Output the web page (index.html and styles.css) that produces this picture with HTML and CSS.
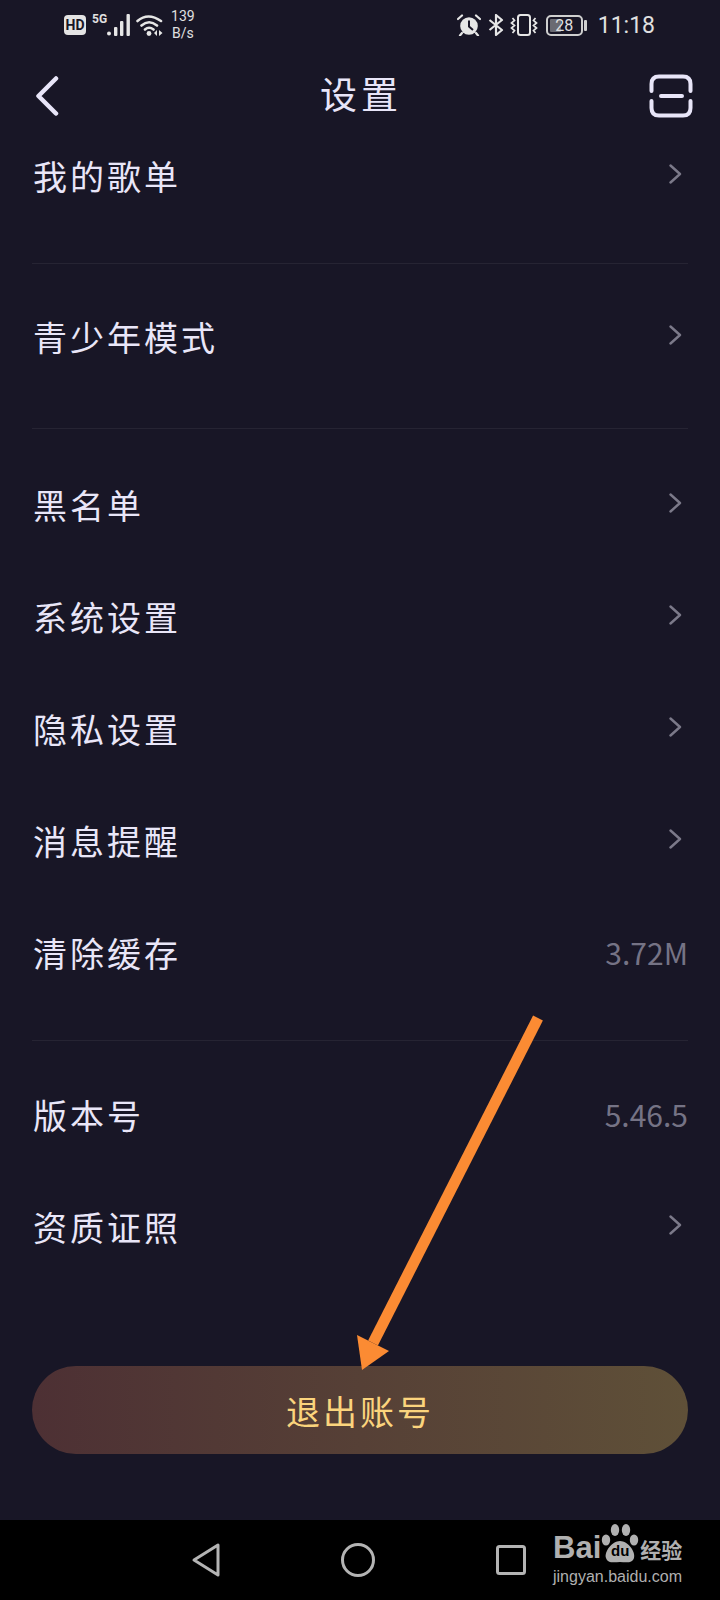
FILE: index.html

```html
<!doctype html>
<html lang="zh-CN">
<head>
    <meta http-equiv="Content-Type" content="text/html; charset=utf-8"/>
    <title>设置</title>
    <link rel="stylesheet" href="styles.css">
</head>

<body>

<svg class="defs" width="0" height="0">
    <symbol id="chev" viewBox="0 0 13 20">
        <path d="M1.5 1.5 L11 10 L1.5 18.5" fill="none" stroke="#7b7989" stroke-width="2.4" stroke-linecap="round" stroke-linejoin="round"/>
    </symbol>
</svg>

<div class="screen">
    <!--状态栏-->
    <div class="status">
        <div class="status-left">
            <svg class="ic-hd" width="22" height="20" viewBox="0 0 22 20"><rect width="22" height="20" rx="4" fill="#e4e4e4"/></svg>
            <span class="hd-text">HD</span>
            <span class="net">5G</span>
            <svg class="ic-signal" width="24" height="22" viewBox="0 0 24 22">
                <circle cx="2" cy="19.5" r="2" fill="#e6e6e6"/>
                <rect x="7" y="13" width="3.4" height="9" rx="1" fill="#e6e6e6"/>
                <rect x="13" y="7" width="3.4" height="15" rx="1" fill="#e6e6e6"/>
                <rect x="19.5" y="0" width="3.4" height="22" rx="1" fill="#e6e6e6"/>
            </svg>
            <svg class="ic-wifi" width="28" height="22" viewBox="0 0 28 22">
                <path d="M1.5 7 Q12 -2 25 7 M5.5 11.5 Q13 5 21 11.5 M9 15.5 Q13 12 17.5 15.5" fill="none" stroke="#e6e6e6" stroke-width="2.6" stroke-linecap="round"/>
                <circle cx="13" cy="19.5" r="2.4" fill="#e6e6e6"/>
                <path d="M21 16 L21 22 L18 19 Z M23 16 L23 22 L26.500 19 Z" fill="#e6e6e6"/>
            </svg>
            <div class="speed"><span>139</span><span>B/s</span></div>
        </div>
        <div class="status-right">
            <svg width="24" height="22" viewBox="0 0 24 22">
                <circle cx="12" cy="12" r="8.800" fill="#e6e6e6"/>
                <path d="M12 6.500 V12.500 L16 16" fill="none" stroke="#181626" stroke-width="2"/>
                <path d="M1 5 L5 1.500 M23 5 L19 1.500 M5 19 L3 21.500 M19 19 L21 21.500" stroke="#e6e6e6" stroke-width="2.200" stroke-linecap="round"/>
            </svg>
            <svg class="ic-bt" width="16" height="22" viewBox="0 0 16 22">
                <path d="M1.500 6 L14 16 L8 21 V1 L14 6 L1.500 16" fill="none" stroke="#e6e6e6" stroke-width="2.200" stroke-linejoin="round"/>
            </svg>
            <svg class="ic-vib" width="28" height="22" viewBox="0 0 28 22">
                <rect x="8" y="1" width="12" height="20" rx="2.500" fill="none" stroke="#e6e6e6" stroke-width="2"/>
                <path d="M2.500 4 L4.500 6.500 L1.500 9 L4.500 11.500 L1.500 14 L4.500 16.500 L2.500 19 M25.500 4 L23.500 6.500 L26.500 9 L23.500 11.500 L26.500 14 L23.500 16.500 L25.500 19" fill="none" stroke="#e6e6e6" stroke-width="1.700"/>
            </svg>
            <div class="battery">
                <div class="battery-body"><i class="battery-fill"></i><span>28</span></div>
                <i class="battery-nub"></i>
            </div>
            <span class="clock">11:18</span>
        </div>
    </div>

    <!--标题栏-->
    <div class="topbar">
        <svg class="back" width="24" height="40" viewBox="0 0 24 40">
            <path d="M21 2.500 L3.500 20 L21 37.500" fill="none" stroke="#e8e5f8" stroke-width="4.500" stroke-linecap="round" stroke-linejoin="round"/>
        </svg>
        <h1 class="title">设置</h1>
        <svg class="scan" width="44" height="44" viewBox="0 0 44 44">
            <path d="M2.500 17 V10 Q2.500 2.500 10 2.500 H34 Q41.500 2.500 41.500 10 V17 M2.500 27 V34 Q2.500 41.500 10 41.500 H34 Q41.500 41.500 41.500 34 V27 M12 22 H33" fill="none" stroke="#e8e5f8" stroke-width="4" stroke-linecap="round"/>
        </svg>
    </div>

    <!--设置列表-->
    <div class="group group-first">
        <div class="row row-short"><span class="label">我的歌单</span><svg class="chev"><use href="#chev"/></svg></div>
    </div>
    <div class="group group-second">
        <div class="row"><span class="label">青少年模式</span><svg class="chev"><use href="#chev"/></svg></div>
    </div>
    <div class="group group-third">
        <div class="row"><span class="label">黑名单</span><svg class="chev"><use href="#chev"/></svg></div>
        <div class="row"><span class="label">系统设置</span><svg class="chev"><use href="#chev"/></svg></div>
        <div class="row"><span class="label">隐私设置</span><svg class="chev"><use href="#chev"/></svg></div>
        <div class="row"><span class="label">消息提醒</span><svg class="chev"><use href="#chev"/></svg></div>
        <div class="row"><span class="label">清除缓存</span><span class="value">3.72M</span></div>
    </div>
    <div class="group group-last">
        <div class="row"><span class="label">版本号</span><span class="value">5.46.5</span></div>
        <div class="row"><span class="label">资质证照</span><svg class="chev"><use href="#chev"/></svg></div>
    </div>

    <div class="logout">退出账号</div>

    <!--底部导航-->
    <div class="navbar">
        <svg width="30" height="36" viewBox="0 0 30 36">
            <path d="M27 3 V33 L3 18 Z" fill="none" stroke="#b4b4b4" stroke-width="3" stroke-linejoin="round"/>
        </svg>
        <svg width="36" height="36" viewBox="0 0 36 36">
            <circle cx="18" cy="18" r="15.500" fill="none" stroke="#b4b4b4" stroke-width="3"/>
        </svg>
        <svg width="32" height="32" viewBox="0 0 32 32">
            <rect x="2.500" y="2.500" width="27" height="27" rx="2" fill="none" stroke="#b4b4b4" stroke-width="3"/>
        </svg>

        <!--水印-->
        <div class="mark">
            <div class="mark-top">
                <span class="mark-bai">Bai</span>
                <div class="mark-paw">
                    <svg width="38" height="40" viewBox="0 0 38 40">
                        <ellipse cx="5" cy="16" rx="4.200" ry="5.500" fill="#b0b0b0"/>
                        <ellipse cx="14" cy="6" rx="4.200" ry="6" fill="#b0b0b0"/>
                        <ellipse cx="25" cy="6" rx="4.200" ry="6" fill="#b0b0b0"/>
                        <ellipse cx="33" cy="16" rx="4.200" ry="5.500" fill="#b0b0b0"/>
                        <path d="M19 17 C27 17 35 28 33 34 C31 40 24 38 19 38 C14 38 7 40 5 34 C3 28 11 17 19 17 Z" fill="#b0b0b0"/>
                    </svg>
                    <span class="mark-du">du</span>
                </div>
                <span class="mark-cn">经验</span>
            </div>
            <div class="mark-url">jingyan.baidu.com</div>
        </div>
    </div>

    <!--标注箭头-->
    <svg class="arrow" width="200" height="370" viewBox="350 1010 200 370">
        <path d="M538 1018 L373 1343" stroke="#fb8b33" stroke-width="11" fill="none"/>
        <path d="M362 1370 L357 1335 L389 1351 Z" fill="#fb8b33"/>
    </svg>
</div>

</body>
</html>
```

FILE: styles.css

```css
* {
    padding: 0;
    margin: 0;
    box-sizing: border-box;
}
html, body {
    width: 720px;
    height: 1600px;
    overflow: hidden;
    background: #181626;
}
body {
    font-family: "Noto Sans CJK SC", "Noto Sans", sans-serif;
}
.defs {
    position: absolute;
}
.screen {
    position: relative;
    width: 720px;
    height: 1600px;
    display: flex;
    flex-direction: column;
}

/* 状态栏 */
.status {
    height: 50px;
    padding: 0 65px 0 64px;
    display: flex;
    justify-content: space-between;
    align-items: center;
    color: #e0e0e0;
    font-family: Roboto, sans-serif;
}
.status-left, .status-right {
    display: flex;
    align-items: center;
}
.hd-text {
    width: 22px;
    margin-left: -22px;
    text-align: center;
    font-size: 14px;
    font-weight: 700;
    color: #181626;
}
.net {
    margin: -13px 0 0 6px;
    font-size: 12px;
    font-weight: 700;
    line-height: 12px;
}
.ic-signal {
    margin-left: 0;
}
.ic-wifi {
    margin-left: 5px;
}
.speed {
    margin-left: 7px;
    display: flex;
    flex-direction: column;
    align-items: center;
    font-size: 14px;
    line-height: 17px;
}
.ic-bt {
    margin-left: 7px;
}
.ic-vib {
    margin-left: 6px;
}
.battery {
    margin-left: 8px;
    display: flex;
    align-items: center;
}
.battery-body {
    position: relative;
    width: 37px;
    height: 21px;
    border: 2px solid #cfcfcf;
    border-radius: 5px;
    text-align: center;
    font-size: 16px;
    line-height: 17px;
}
.battery-fill {
    position: absolute;
    left: 2px;
    top: 2px;
    width: 11px;
    height: 13px;
    background: #6a6a72;
    border-radius: 1px;
}
.battery-body span {
    position: relative;
}
.battery-nub {
    width: 3px;
    height: 11px;
    margin-left: 1px;
    background: #cfcfcf;
    border-radius: 1px;
}
.clock {
    margin-left: 11px;
    font-size: 23px;
}

/* 标题栏 */
.topbar {
    height: 92px;
    padding: 0 27px 0 35px;
    display: grid;
    grid-template-columns: 1fr auto 1fr;
    align-items: center;
}
.title {
    margin: -6px 6px 0 0;
    font-size: 37px;
    font-weight: 400;
    letter-spacing: 4px;
    color: #e8e5f8;
}
.scan {
    justify-self: end;
}

/* 设置列表 */
.group {
    margin: 0 32px;
}
.group-first {
    height: 122px;
    border-bottom: 1px solid #262433;
}
.group-second {
    height: 165px;
    padding-top: 16px;
    border-bottom: 1px solid #262433;
}
.group-third {
    height: 612px;
    padding-top: 19px;
    border-bottom: 1px solid #262433;
}
.group-last {
    padding-top: 17px;
}
.row {
    height: 112px;
    display: flex;
    justify-content: space-between;
    align-items: center;
}
.row-short {
    height: 66px;
}
.label {
    margin-left: 1px;
    font-size: 34px;
    letter-spacing: 3px;
    color: #e9e6f8;
}
.value {
    font-size: 30px;
    color: #757385;
}
.chev {
    width: 13px;
    height: 20px;
    margin: -2px 6px 0 0;
}

/* 退出按钮 */
.logout {
    height: 88px;
    margin: 84px 32px 0;
    border-radius: 44px;
    background: linear-gradient(90deg, #4d3034, #5f5038);
    display: flex;
    justify-content: center;
    align-items: center;
    font-size: 34px;
    letter-spacing: 3px;
    color: #fbd47d;
}

/* 底部导航 */
.navbar {
    position: relative;
    height: 80px;
    margin-top: auto;
    padding: 0 193px 0 191px;
    background: #000;
    display: flex;
    justify-content: space-between;
    align-items: center;
}
.mark {
    position: absolute;
    left: 553px;
    top: 2px;
    width: 130px;
    color: #b0b0b0;
}
.mark-top {
    display: flex;
    align-items: flex-end;
    height: 42px;
}
.mark-bai {
    font-family: "Liberation Sans", sans-serif;
    font-size: 31px;
    font-weight: 700;
    line-height: 32px;
}
.mark-paw {
    position: relative;
    width: 38px;
    height: 40px;
    flex: none;
}
.mark-du {
    position: absolute;
    left: 0;
    right: 0;
    top: 19px;
    text-align: center;
    font-family: "Liberation Sans", sans-serif;
    font-size: 15px;
    font-weight: 700;
    line-height: 16px;
    color: #000;
}
.mark-cn {
    margin-left: 1px;
    font-size: 21px;
    font-weight: 700;
    line-height: 30px;
    white-space: nowrap;
}
.mark-url {
    margin-top: 4px;
    font-family: "Liberation Sans", sans-serif;
    font-size: 16px;
    line-height: 18px;
    white-space: nowrap;
}

/* 标注箭头 */
.arrow {
    position: absolute;
    left: 350px;
    top: 1010px;
}
```
